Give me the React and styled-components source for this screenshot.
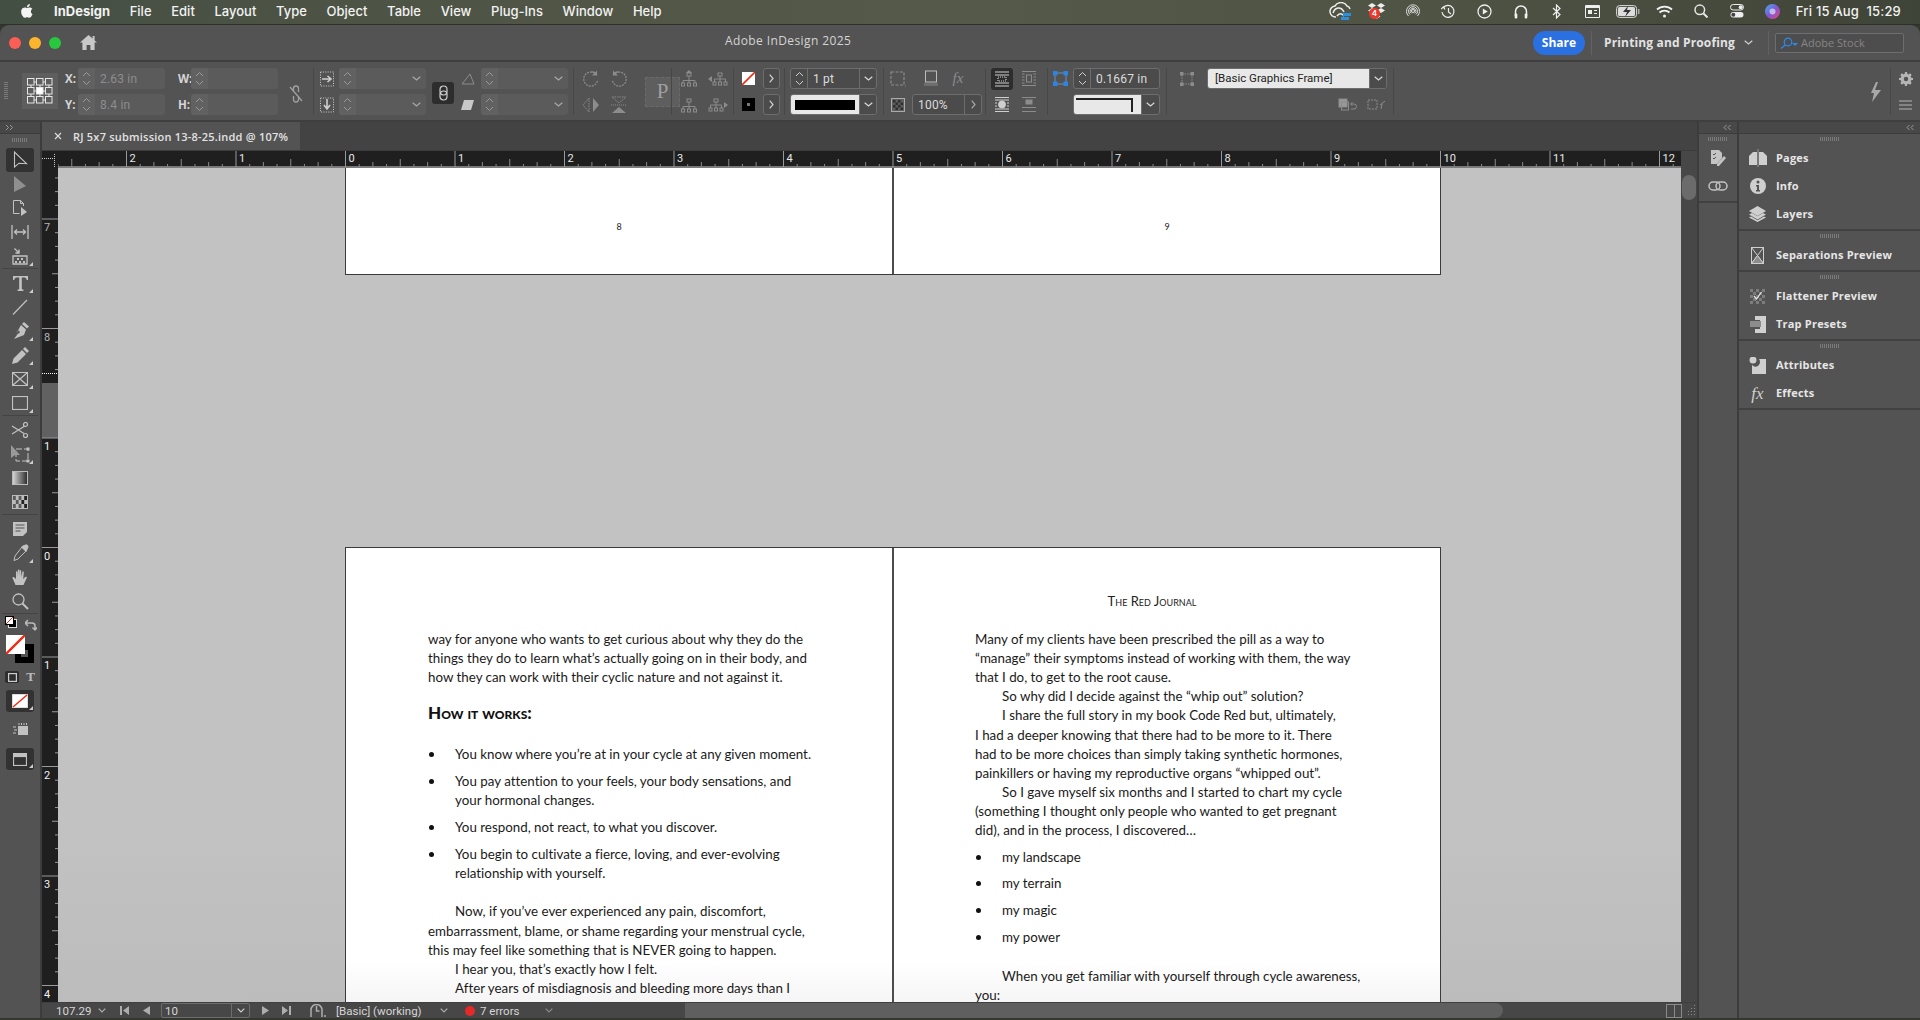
import React from 'react';
import styled, { createGlobalStyle } from 'styled-components';

const Global = createGlobalStyle`
  html, body { margin: 0; padding: 0; background: #3a3f35; overflow: hidden; }
  #root { width: 1920px; height: 1020px; }
  * { box-sizing: border-box; }
`;

const UI = `"Open Sans", "Liberation Sans", sans-serif`;
const NARROW = `Roboto, "Liberation Sans", sans-serif`;

const Screen = styled.div`
  width: 1920px; height: 1020px; display: flex; flex-direction: column; overflow: hidden;
  background: #33382f; font-family: ${UI};
`;

/* ---------- mac menu bar ---------- */
const MenuBar = styled.div`
  height: 25px; flex: none; display: flex; align-items: center; padding-left: 20px; padding-bottom: 2px;
  background: linear-gradient(90deg, #444f44 0%, #4e5445 20%, #55594a 50%, #4f5344 75%, #3f4438 100%);
  color: #f2f2f2; font: 500 13px Inter, "Liberation Sans", sans-serif;
  border-bottom: 1px solid #2f3129;
`;
const AppleWrap = styled.span` width: 14px; display: flex; margin-right: 20px; `;
const MenuItem = styled.span`
  margin-right: 19.7px; font-weight: ${p => p.$bold ? 700 : 500}; white-space: nowrap;
`;
const MenuRight = styled.div` margin-left: auto; display: flex; align-items: center; padding-right: 19px; height: 100%; `;
const StatusIcon = styled.span` width: 36px; display: flex; justify-content: center; align-items: center; position: relative; `;
const Clock = styled.span` margin-left: 5px; white-space: pre; letter-spacing: .2px; `;
const Badge = styled.span`
  position: absolute; left: 10px; top: 5px; width: 11px; height: 11px; border-radius: 50%; background: #e8392c;
  color: #fff; font-size: 8px; line-height: 11px; text-align: center; font-weight: 600;
`;

/* ---------- window ---------- */
const Window = styled.div`
  flex: 1; margin-bottom: 2px; min-height: 0; display: flex; flex-direction: column;
  background: #535353; border-radius: 9px 9px 0 0; overflow: hidden;
`;
const TitleBar = styled.div`
  height: 37px; flex: none; display: flex; align-items: center; position: relative; border-bottom: 2px solid #3e3e3e;
`;
const Lights = styled.div` display: flex; gap: 8px; margin-left: 9px; `;
const Light = styled.span` width: 12px; height: 12px; border-radius: 50%; background: ${p => p.$c}; `;
const HomeWrap = styled.span` display: flex; margin-left: 19px; color: #c8c8c8; `;
const Title = styled.span`
  position: absolute; left: 725px; top: 7px; color: #d4d4d4; font-size: 12px; letter-spacing: .4px; white-space: nowrap;
`;
const TitleRight = styled.div` margin-left: auto; display: flex; align-items: center; padding-right: 16px; `;
const ShareBtn = styled.span`
  width: 52px; height: 24px; border-radius: 12px; background: #2a70e0; color: #fff; text-align: center;
  font: 700 12px/24px ${UI};
`;
const VDiv = styled.span` width: 1px; height: 24px; background: #626262; margin: 0 ${p => p.$m}px 0 ${p => p.$l}px; `;
const Workspace = styled.span` color: #e2e2e2; font: 700 12px ${UI}; letter-spacing: .15px; white-space: nowrap; width: 131px; `;
const WsChevron = styled.span` display: flex; margin: 0 15px 0 9px; color: #cfcfcf; `;
const SearchBox = styled.div`
  width: 129px; height: 20px; border: 1px solid #6e6e6e; border-radius: 2px; display: flex; align-items: center;
  padding-left: 4px; gap: 3px; color: #2b8cf0; background: #4d4d4d;
`;
const SearchText = styled.span` color: #858585; font-size: 11px; white-space: nowrap; `;

/* ---------- control bar ---------- */
const ControlBar = styled.div`
  height: 60px; flex: none; display: flex; align-items: center; border-bottom: 2px solid #3f3f3f; padding-top: 1px;
  color: #8c8c8c;
`;
const Section = styled.div`
  width: ${p => p.$w}px; flex: none; height: 47px; display: flex; align-items: stretch;
  border-left: ${p => p.$first ? 'none' : '1px solid #474747'};
`;
const Grip = styled.span`
  width: 4px; height: 18px; margin: 14px 14px 0 4px; flex: none;
  background: repeating-linear-gradient(#7a7a7a 0 1px, transparent 1px 2px);
`;
const RefBox = styled.div`
  width: 36px; height: 36px; background: #5e5e5e; margin: 5px 7px 0 0; flex: none; display: flex; align-items: center; justify-content: center;
`;
const Stack = styled.div`
  width: ${p => p.$w}px; flex: none; display: grid; grid-template-rows: 21px 21px; row-gap: 5px;
  align-items: center; justify-items: center; margin-left: ${p => p.$ml || 0}px;
`;
const Label = styled.span` width: 13px; flex: none; font: 700 11.5px ${UI}; color: #d5d5d5; `;
const LabeledRow = styled.div` display: flex; align-items: center; width: 100%; `;
const Field = styled.div`
  width: ${p => p.$w}px; height: 21px; border-radius: 3px; display: flex; align-items: center; overflow: hidden;
  background: ${p => p.$active ? '#4b4b4b' : '#5b5b5b'};
  border: ${p => p.$active ? '1px solid #6d6d6d' : 'none'};
  color: ${p => p.$active ? '#dcdcdc' : '#8d8d8d'};
  font: 12px ${NARROW};
`;
const Spin = styled.span`
  width: ${p => p.$w || 17}px; height: 100%; flex: none; display: flex; align-items: center; justify-content: center;
  background: ${p => p.$active ? 'transparent' : '#616161'};
  border-right: ${p => p.$active ? '1px solid #6d6d6d' : 'none'};
  color: ${p => p.$active ? '#cfcfcf' : '#9a9a9a'};
`;
const Value = styled.span` flex: 1; padding-left: ${p => p.$pl || 5}px; white-space: nowrap; letter-spacing: .2px; line-height: 1; `;
const Drop = styled.span`
  width: ${p => p.$w || 17}px; height: 100%; flex: none; display: flex; align-items: center; justify-content: center;
  border-left: ${p => p.$line ? '1px solid #6d6d6d' : 'none'};
  color: ${p => p.$bright ? '#d8d8d8' : '#a8a8a8'};
  background: ${p => p.$dark ? '#4b4b4b' : 'transparent'};
`;
const LinkBtn = styled.span`
  width: 22px; height: 22px; align-self: center; flex: none; margin-left: 6px; margin-top: 3px; background: #2d2d2d; border-radius: 3px;
  display: flex; align-items: center; justify-content: center; color: #cfcfcf;
`;
const PBox = styled.div`
  width: 35px; height: 30px; align-self: center; margin-left: 12px; background: #5e5e5e; color: #a0a0a0; flex: none;
  display: flex; align-items: center; justify-content: center; font: 21px "Liberation Serif", serif; border: 1px dashed #6b6b6b;
`;
const Swatch = styled.span`
  width: 13px; height: 13px; flex: none; display: flex; align-items: center; justify-content: center; overflow: hidden;
  background: #000;
  &::after { content: ''; width: 3px; height: 3px; background: #777; }
`;
const ArrowBtn = styled.span`
  width: 17px; height: 21px; border: 1px solid #6d6d6d; border-radius: 3px; display: flex; align-items: center; justify-content: center;
  color: #d0d0d0; background: #4b4b4b;
`;
const StrokePreview = styled.span`
  flex: 1; height: 100%; background: #e8e8e8; display: flex; align-items: center; justify-content: center; padding: 0 4px;
`;
const StrokeLine = styled.span` display: block; width: 100%; height: 10px; background: #000; `;
const CornerPreview = styled.span`
  flex: 1; height: 100%; background: #e8e8e8; position: relative;
  &::after { content: ''; position: absolute; left: 2px; top: 3px; right: 8px; bottom: 2px; border-top: 2px solid #222; border-right: 2px solid #222; }
`;
const WrapBtn = styled.span`
  width: 22px; height: 22px; border-radius: 3px; display: flex; align-items: center; justify-content: center;
  background: ${p => p.$on ? '#2d2d2d' : 'transparent'}; color: #cfcfcf;
`;
const FrameField = styled.div`
  width: 180px; height: 21px; border: 1px solid #6d6d6d; border-radius: 3px; display: flex; overflow: hidden; align-items: center;
`;
const FrameText = styled.span`
  flex: 1; height: 100%; background: #e8e8e8; color: #222; font: 11.5px/18px ${NARROW}; padding-left: 7px; white-space: nowrap;
`;
const ChainSlot = styled.span` flex: 1; display: flex; align-items: center; justify-content: center; padding-top: 5px; color: #a0a0a0; `;
const PairRow = styled.div` display: flex; width: 100%; align-items: center; justify-content: center; color: #8c8c8c; padding-right: 7px; gap: 15px; `;
const OverrideIcons = styled.div` display: flex; width: 100%; justify-content: flex-end; gap: 9px; `;
const BoltWrap = styled.span` margin-left: auto; align-self: center; padding-right: 8px; display: flex; `;

/* ---------- main area ---------- */
const Main = styled.div` flex: 1; min-height: 0; display: flex; background: #3c3c3c; `;
const LeftCol = styled.div` width: 40px; flex: none; display: flex; flex-direction: column; margin-right: 2px; background: #535353; `;
const Strip = styled.div`
  height: 12px; flex: none; background: #484848; color: #9a9a9a; display: flex; align-items: center;
  justify-content: ${p => p.$end ? 'flex-end' : 'flex-start'}; padding: 0 5px; border-bottom: 1px solid #3c3c3c;
`;
const Toolbar = styled.div` flex: 1; display: flex; flex-direction: column; align-items: center; color: #c2c2c2; `;
const HGrip = styled.span`
  display: block; width: ${p => p.$w || 18}px; height: 4px; flex: none; margin: ${p => p.$m || '4px auto 3px'};
  background: repeating-linear-gradient(90deg, #7a7a7a 0 1px, transparent 1px 2px);
`;
const Tool = styled.div`
  width: 28px; height: ${p => p.$h || 24}px; flex: none; display: flex; align-items: center; justify-content: center; position: relative;
  background: ${p => p.$on ? '#323232' : 'transparent'}; border-radius: 3px;
  &::after {
    content: ''; display: ${p => p.$more ? 'block' : 'none'}; position: absolute; right: 1px; bottom: 2px;
    border-left: 4px solid transparent; border-bottom: 4px solid #cdcdcd;
  }
`;
const ToolSep = styled.div` width: 36px; height: 3px; flex: none; border-top: 1px solid #444; `;
const ToolSpacer = styled.div` height: ${p => p.$h}px; flex: none; `;
const ColorBox = styled.div` width: 34px; height: 47px; flex: none; position: relative; `;
const MiniDefaults = styled.span` position: absolute; left: 2px; top: 0; display: flex; `;
const SwapIcon = styled.span` position: absolute; right: 0; top: 3px; color: #bbb; display: flex; `;
const FillSwatch = styled.span`
  position: absolute; left: 3px; top: 19px; width: 19px; height: 19px; background: #fff; z-index: 1; overflow: hidden; display: flex;
`;
const StrokeSwatch = styled.span`
  position: absolute; left: 12px; top: 28px; width: 19px; height: 19px; border: 6px solid #000; background: #535353;
`;
const FormatRow = styled.div` display: flex; width: 30px; height: 24px; flex: none; margin-top: 2px; align-items: center; justify-content: space-between; color: #bbb; font: 700 13px "Liberation Serif", serif; `;
const FormatBtn = styled.span` width: 14px; height: 12px; border-radius: 2px; background: #2e2e2e; display: flex; align-items: center; justify-content: center; `;

const Center = styled.div` width: 1655px; flex: none; display: flex; flex-direction: column; background: #474747; `;
const TabRow = styled.div` height: 29px; flex: none; display: flex; background: #434343; border-bottom: 1px solid #3c3c3c; `;
const Tab = styled.div`
  width: 258px; background: #535353; display: flex; align-items: center; color: #e2e2e2; font: 600 11px ${UI}; white-space: nowrap; letter-spacing: .22px;
`;
const TabClose = styled.span` display: flex; width: 31px; justify-content: center; color: #dcdcdc; `;
const RulerRow = styled.div` height: 16px; flex: none; display: flex; background: #1f1f1f; `;
const RulerEnd = styled.div` flex: 1; background: #474747; `;
const Origin = styled.div` width: 16px; flex: none; `;
const RulerSvg = styled.svg` display: block; flex: none; background: #1f1f1f; `;
const Body = styled.div` flex: 1; min-height: 0; display: flex; `;
const Canvas = styled.div`
  width: 1623px; flex: none; overflow: hidden; background: linear-gradient(#c2c2c2 80%, #bcbcbc); padding-left: 287px;
  display: flex; flex-direction: column; border-top: 1px solid #7d7d7d;
`;
const Spread = styled.div`
  width: 1096px; flex: none; display: flex; height: ${p => p.$h}px; margin-bottom: ${p => p.$mb || 0}px;
  border: 1px solid #3a3a3a; border-top-width: ${p => p.$noTop ? 0 : 1}px; border-bottom-width: ${p => p.$fade ? 0 : 1}px;
  background: ${p => p.$fade ? 'linear-gradient(#fff 90%, #f4f4f4)' : '#fff'};
`;
const Page = styled.div`
  width: ${p => p.$spine ? 548 : 546}px; flex: none; color: #1a1a1a; font: 13.35px/19px Lato, "Liberation Sans", sans-serif;
  font-variant-ligatures: none;
  border-right: ${p => p.$spine ? '2px solid #4c4c4c' : 'none'};
  padding-left: ${p => p.$pl || 0}px; padding-top: ${p => p.$pt || 0}px;
`;
const Folio = styled.div`
  font-size: 9px; line-height: 10px; text-align: center; padding-top: 54px; color: #222;
`;
const Running = styled.div`
  font: 13px/16px Lato, sans-serif; text-align: center; font-variant: small-caps; margin-top: -37px; padding-right: 111px; height: 37px; color: #222;
`;
const L = styled.div`
  white-space: nowrap; height: ${p => p.$h || 19}px; line-height: ${p => p.$h || 19}px; padding-left: ${p => p.$ind ? 27 : 0}px; margin-top: ${p => p.$mt || 0}px;
`;
const Heading = styled.div`
  font: 900 17px/22px Lato, sans-serif; font-variant: small-caps; color: #111; margin-top: 15px; white-space: nowrap;
`;
const Bullet = styled.div`
  position: relative; padding-left: 27px; margin-top: ${p => p.$mt || 8}px; white-space: nowrap;
  &::before { content: ''; position: absolute; left: 1px; top: 7px; width: 5px; height: 5px; border-radius: 50%; background: #111; }
`;
const ScrollCol = styled.div` flex: 1; background: #474747; padding: 8px 1px 0 1px; `;
const ScrollThumb = styled.div` height: 25px; border-radius: 7px; background: #6b6b6b; `;
const StatusBar = styled.div`
  height: 16px; flex: none; display: flex; align-items: center; background: #474747; color: #d6d6d6; font: 11.5px ${NARROW}; white-space: nowrap;
  border-top: 1px solid #3f3f3f;
`;
const Zoom = styled.span` width: 36px; margin-left: 14px; overflow: hidden; flex: none; `;
const StatIcon = styled.span` display: flex; margin-left: ${p => p.$ml}px; color: ${p => p.$c || '#adadad'}; flex: none; `;
const PageField = styled.div`
  width: 89px; height: 15px; margin-left: 11px; border: 1px solid #6d6d6d; border-radius: 2px; display: flex; align-items: center; padding-left: 3px; flex: none;
`;
const PageDrop = styled.span`
  margin-left: auto; width: 18px; height: 100%; border-left: 1px solid #6d6d6d; display: flex; align-items: center; justify-content: center; color: #cfcfcf;
`;
const StatText = styled.span` margin-left: ${p => p.$ml}px; flex: none; width: ${p => p.$w}px; `;
const Dot = styled.span` width: 10px; height: 10px; border-radius: 50%; background: #e62a2a; margin-left: 17px; flex: none; `;
const HThumb = styled.div` width: 818px; height: 15px; margin-left: 132px; background: #5f5f5f; border-radius: 0 8px 8px 0; flex: none; `;
const Corner = styled.span` margin-left: auto; display: flex; align-items: center; gap: 4px; padding-right: 1px; color: #9a9a9a; `;
const ViewBtn = styled.span` width: 16px; height: 14px; border: 1px solid #8a8a8a; background: linear-gradient(90deg, transparent 7px, #8a8a8a 7px 8px, transparent 8px); `;

/* ---------- docks ---------- */
const Dock = styled.div` width: ${p => p.$w}px; flex: none; margin-left: 2px; display: flex; flex-direction: column; background: #535353; `;
const PanelGroup = styled.div`
  border-bottom: 2px solid #414141; flex: none; padding-bottom: 1px; position: relative; padding-top: 10px;
`;
const GripWrap = styled.span` position: absolute; top: 3px; left: 0; right: 0; display: flex; justify-content: center; `;
const PanelRow = styled.div` height: 28px; display: flex; align-items: center; color: #cfcfcf; `;
const PanelIcon = styled.span` width: 37px; display: flex; justify-content: center; flex: none; `;
const PanelName = styled.span` font: 700 11px ${UI}; color: #e6e6e6; letter-spacing: .2px; white-space: nowrap; margin-top: -2px; `;
const MiniRow = styled.div` height: 28px; display: flex; align-items: center; justify-content: center; color: #c4c4c4; `;
const FxGlyph = styled.span` color: ${p => p.$c}; font: italic ${p => p.$s}px/1 "Liberation Serif", serif; `;
const SpinnerWrap = styled.span` display: flex; `;
const FlipWrap = styled.span` display: flex; transform: ${p => p.$flip ? 'scaleX(-1)' : 'none'}; `;

/* ---------- icons ---------- */
const S = ({ w = 16, h = 16, vb, children, sw = 1.2, fill = 'none' }) => (
  <svg width={w} height={h} viewBox={vb || `0 0 ${w} ${h}`} fill={fill} stroke="currentColor" strokeWidth={sw}>{children}</svg>
);
const ChevD = ({ s = 8 }) => <S w={s} h={5}><path d={`M.7.7 ${s / 2} 4l${s / 2 - .7}-3.3`} /></S>;
const ChevR = () => <S w={5} h={9}><path d="M.7.7 4 4.5.7 8.3" /></S>;
const Spinner = () => <SpinnerWrap><S w={9} h={17} sw={1}><path d="M1 6 4.5 2.5 8 6M1 11l3.5 3.5L8 11" /></S></SpinnerWrap>;

const Apple = () => (
  <svg width="14" height="16" viewBox="0 0 14 16" fill="#f4f4f4"><path d="M10.9 8.4c0-1.7 1.4-2.5 1.5-2.6-.8-1.2-2.1-1.3-2.5-1.4-1.1-.1-2.1.6-2.6.6s-1.4-.6-2.3-.6C3.4 4.5 2.3 5.1 1.7 6.2.5 8.3 1.4 11.4 2.6 13.1c.6.8 1.2 1.8 2.2 1.7.9 0 1.2-.6 2.3-.6s1.4.6 2.3.6 1.6-.8 2.1-1.7c.7-1 1-1.9 1-2-.1 0-1.6-.7-1.6-2.7zM9.1 3.2c.5-.6.8-1.4.7-2.2-.7 0-1.6.5-2.1 1.1-.4.5-.8 1.3-.7 2.1.8 0 1.6-.4 2.1-1z" /></svg>
);
const Home = () => <svg width="17" height="15" viewBox="0 0 17 15" fill="currentColor"><path d="M8.5 0 0 7.6h2.4V15h4.2v-5h3.8v5h4.2V7.6H17L14.6 5.4V1h-2v2.6z" /></svg>;

const RefGrid = () => (
  <svg width="26" height="26" viewBox="0 0 26 26" fill="none" stroke="#e6e6e6">
    {[0, 9, 18].map(y => [0, 9, 18].map(x => (
      <rect key={`${x}${y}`} x={x + .5} y={y + .5} width="6.5" height="6.5" fill={x === 9 && y === 9 ? '#fff' : 'none'} />
    )))}
    <path d="M7 4h2M16 4h2M7 13h2M16 13h2M7 22h2M16 22h2M4 7v2M13 7v2M22 7v2M4 16v2M13 16v2M22 16v2" />
  </svg>
);
const ChainBroken = () => <S w={14} h={18} sw={1.3}><path d="M4.5 7V3.5a2.4 2.4 0 0 1 5 0V7M4.5 11v3.5a2.4 2.4 0 0 0 5 0V11M1 2l12 14" /></S>;
const Chain = () => <S w={9} h={16} sw={1.2}><rect x="1" y="1" width="7" height="9" rx="3.4" /><rect x="1" y="6" width="7" height="9" rx="3.4" /></S>;
const ScaleX = () => <svg width="14" height="16" viewBox="0 0 14 16" fill="none" stroke="#cfcfcf"><path d="M.5 1h13v14H.5z" strokeDasharray="1 1.4" /><path d="M2 8h8M7.5 5 11 8l-3.5 3" strokeWidth="1.6" /></svg>;
const ScaleY = () => <svg width="14" height="16" viewBox="0 0 14 16" fill="none" stroke="#cfcfcf"><path d="M.5 1h13v14H.5z" strokeDasharray="1 1.4" /><path d="M7 2v9M4 8l3 4 3-4" strokeWidth="1.6" /></svg>;
const Angle = () => <S w={14} h={12} sw={1}><path d="M1 11h12L9 1z" /></S>;
const Shear = () => <svg width="13" height="10" viewBox="0 0 13 10" fill="#c8c8c8"><path d="M3 0h10l-3 10H0z" /></svg>;
const RotCW = () => <S w={18} h={18} sw={1.2}><path d="M15.5 11A7 7 0 1 1 14 4.5" strokeDasharray="2 1" /><path d="M15 .5v5h-5" fill="currentColor" strokeWidth="0" /><path d="M9.5 1.8C12 1.6 14 3 15 5" /></S>;
const RotCCW = () => <S w={18} h={18} sw={1.2}><path d="M2.5 11A7 7 0 1 0 4 4.5" strokeDasharray="2 1" /><path d="M3 .5v5h5" fill="currentColor" strokeWidth="0" /><path d="M8.5 1.8C6 1.6 4 3 3 5" /></S>;
const FlipH = () => <svg width="18" height="16" viewBox="0 0 18 16" fill="currentColor"><path d="M7 1v14L1 8z" fill="none" stroke="currentColor" strokeDasharray="1.5 1" /><path d="M11 1v14l6-7z" /></svg>;
const FlipV = () => <svg width="16" height="18" viewBox="0 0 16 18" fill="currentColor"><path d="M1 1h14L8 7z" fill="none" stroke="currentColor" strokeDasharray="1.5 1" /><path d="M1 17h14l-7-6z" /><path d="M0 9h16" stroke="currentColor" strokeDasharray="1 1" /></svg>;
const TreeIcon = ({ a }) => (
  <svg width="18" height="18" viewBox="0 0 18 18" fill="none" stroke="currentColor" strokeWidth="1">
    <path d="M9 6v4M3 13v-2.500h12V13M9 10.500V13" />
    <rect x="7" y="3" width="4" height="3" /><rect x="1.500" y="13" width="3" height="3" /><rect x="7.500" y="13" width="3" height="3" /><rect x="13.500" y="13" width="3" height="3" />
    {a === 'u' && <path d="M9 0 6 3h6z" fill="currentColor" stroke="none" />}
  </svg>
);
const TreeSide = ({ flip }) => (
  <FlipWrap $flip={flip}>
    <svg width="20" height="14" viewBox="0 0 20 14" fill="none" stroke="currentColor" strokeWidth="1">
      <path d="M4 4 0 7l4 3z" fill="currentColor" stroke="none" />
      <rect x="10" y="1" width="4" height="3" /><path d="M12 4v3M6.500 10V7h11v3M12 7v3" />
      <rect x="5" y="10" width="3" height="3" /><rect x="10.500" y="10" width="3" height="3" /><rect x="16" y="10" width="3" height="3" />
    </svg>
  </FlipWrap>
);
const NoneSwatch = ({ w = 13 }) => <svg width={w} height={w} viewBox="0 0 13 13"><rect width="13" height="13" fill="#fff" /><path d="M0 13 13 0" stroke="#f02a12" strokeWidth="1.6" /></svg>;
const FrameDash = () => <S w={16} h={16} sw={1.2}><path d="M1 1h13v13H1z" strokeDasharray="3 1.5" /><path d="M15 15h1" /></S>;
const DropShadow = () => <svg width="14" height="18" viewBox="0 0 14 18" fill="none"><rect x="1.500" y="1" width="11" height="11" stroke="#bdbdbd" /><rect x="0" y="13" width="14" height="3" fill="#6d6d6d" /></svg>;
const Checker = () => (
  <svg width="14" height="14" viewBox="0 0 14 14"><rect x=".5" y=".5" width="13" height="13" fill="#5e5e5e" stroke="#aaa" />
    {[[2, 2], [7, 2], [4.5, 4.500], [9.500, 4.500], [2, 7], [7, 7], [4.5, 9.500], [9.500, 9.500]].map(([x, y]) => <rect key={`${x}${y}`} x={x} y={y} width="2.500" height="2.500" fill="#2f2f2f" />)}
  </svg>
);
const WrapNone = () => <S w={14} h={16} sw={1.2}><path d="M0 1h14M0 15h14M0 4h14M0 12h14" /><rect x="3" y="6" width="8" height="4" strokeDasharray="1 1" /></S>;
const WrapBox = () => <S w={14} h={15} sw={1}><path d="M0 .5h14M0 14.500h14M0 3h2.500M0 6h2.500M0 9h2.500M0 12h2.500M11.500 3H14M11.500 6H14M11.500 9H14M11.500 12H14" /><rect x="4.500" y="4" width="5" height="7" /></S>;
const WrapShape = () => <S w={14} h={15} sw={1}><path d="M0 .5h14M0 14.500h14M0 3h14M0 12h14M0 6h2M0 9h2M12 6h2M12 9h2" /><ellipse cx="7" cy="7.500" rx="3.500" ry="3.500" fill="currentColor" /></S>;
const WrapJump = () => <S w={14} h={15} sw={1}><path d="M0 .5h14M0 14.500h14M0 10.500h14" /><rect x="4" y="3" width="6" height="4" fill="currentColor" /></S>;
const CornerHandles = () => (
  <svg width="15" height="15" viewBox="0 0 15 15"><rect x="2" y="2" width="11" height="11" fill="none" stroke="#6d8fb5" /><g fill="#2b85e6"><rect width="4.500" height="4.500" /><rect x="10.500" width="4.500" height="4.500" /><rect y="10.500" width="4.500" height="4.500" /><rect x="10.500" y="10.500" width="4.500" height="4.500" /></g></svg>
);
const ObjStyle = () => <S w={14} h={14} sw={1}><rect x="2" y="2" width="10" height="10" strokeDasharray="1.500 1" /><g fill="currentColor"><rect x="0" y="0" width="3" height="3" /><rect x="11" y="0" width="3" height="3" /><rect x="0" y="11" width="3" height="3" /><rect x="11" y="11" width="3" height="3" /></g></S>;
const ClearOv = () => (
  <svg width="20" height="14" viewBox="0 0 20 14" fill="none" stroke="#8c8c8c"><rect x="1" y="1" width="8" height="8" fill="#999" /><rect x="3.500" y="4" width="7" height="8" /><path d="M13 11h3a2 2 0 0 0 0-5h-3M14.500 4 12.500 6l2 2" /></svg>
);
const ClearFrame = () => <S w={20} h={14} sw={1}><rect x="1" y="2" width="9" height="9" strokeDasharray="2 1" /><path d="m13 7 5-4M14 11l1-5" /></S>;
const Bolt = () => <svg width="12" height="20" viewBox="0 0 12 20" fill="#a8a8a8"><path d="M6 0h2L5 8h6L2 20l2-9H1z" /></svg>;
const Gear = () => <svg width="14" height="14" viewBox="0 0 14 14" fill="#b5b5b5"><path fillRule="evenodd" d="M6 0h2l.3 1.800 1.300.6L11 1.300l1.700 1.700-1.100 1.500.6 1.300L14 6v2l-1.800.3-.6 1.300 1.100 1.500-1.700 1.700-1.500-1.100-1.300.6L8 14H6l-.3-1.800-1.300-.6L3 12.700 1.300 11l1.100-1.500-.6-1.300L0 8V6l1.800-.3.6-1.300L1.300 3 3 1.300l1.400 1.100 1.300-.6zM7 4.800a2.200 2.200 0 1 0 0 4.400 2.200 2.200 0 0 0 0-4.400z" /></svg>;
const Burger = () => <svg width="13" height="10" viewBox="0 0 13 10" stroke="#b5b5b5"><path d="M0 1h13M0 5h13M0 9h13" /></svg>;
const SearchIcon = () => <svg width="18" height="12" viewBox="0 0 18 12" fill="none" stroke="currentColor" strokeWidth="1.200"><circle cx="8" cy="5" r="3.800" /><path d="M5.300 8 1 11.500" /><path d="m12 6 3 3 3-3z" fill="currentColor" stroke="none" /></svg>;

/* tools */
const T = {
  sel: <S w={16} h={18} sw={1.1}><path d="M2.500 1v15l4.500-3.800 7.500.5z" /></S>,
  dir: <svg width="14" height="18" viewBox="0 0 14 18" fill="#8f8f8f"><path d="M1 1v16l12-6z" /></svg>,
  page: <svg width="16" height="18" viewBox="0 0 16 18" fill="none" stroke="currentColor"><path d="M1.500 1.500h7l3 3V7M1.500 1.500v13h6M8.500 1.500v3h3" /><path d="M9 8v9l6-4z" fill="currentColor" stroke="none" /></svg>,
  gap: <S w={18} h={14} sw={1.3}><path d="M1 0v14M17 0v14M4 7h10M6 4.500 3.500 7 6 9.500M12 4.500 14.500 7 12 9.500" /></S>,
  cont: <svg width="16" height="18" viewBox="0 0 16 18" fill="none" stroke="currentColor" strokeWidth="1.300"><path d="M1 9h14v8H1z" /><path d="M2.500 1.500 7 6M7 2.500V6H3.500" /><g fill="currentColor" stroke="none"><rect x="5" y="11" width="2" height="2" /><rect x="9" y="11" width="2" height="2" /><rect x="3" y="14" width="2" height="2" /><rect x="7" y="14" width="2" height="2" /><rect x="11" y="14" width="2" height="2" /></g></svg>,
  type: <svg width="15" height="15" viewBox="0 0 15 15" fill="currentColor"><path d="M0 0h15v4h-1.300c-.2-1.500-.8-2.400-2.400-2.400H8.800v11c0 .8.500 1 1.600 1V15H4.600v-1.400c1.100 0 1.600-.2 1.600-1v-11H3.700C2.100 1.600 1.500 2.500 1.300 4H0z" /></svg>,
  line: <S w={16} h={16}><path d="M1 15.500 15 1" /></S>,
  pen: <svg width="17" height="18" viewBox="0 0 17 18" fill="currentColor"><path d="M12 0l5 4.500-2 2L10 2zM9 3l5 4.500-2 5.500-10 4 4-5.500a1.500 1.500 0 1 0-1.200-1z" /></svg>,
  pencil: <svg width="17" height="17" viewBox="0 0 17 17" fill="currentColor"><path d="M13 0l4 4-2 2-4-4zM10 3l4 4-8.500 8.500L0 17l1.500-5.500z" /></svg>,
  xframe: <S w={16} h={14}><path d="M.500.500h15v13H.500zM.500.500l15 13M15.500.500l-15 13" /></S>,
  rect: <S w={16} h={14}><rect x=".5" y=".5" width="15" height="13" /></S>,
  scissors: <S w={18} h={16} sw={1.2}><circle cx="14.500" cy="2.500" r="2" /><circle cx="14.500" cy="13.500" r="2" /><path d="M1 4 13 11.500M1 12 13 4.500" /></S>,
  free: <svg width="20" height="18" viewBox="0 0 20 18" fill="none" stroke="currentColor"><path d="M6 4h12v12H6z" strokeDasharray="6 2" /><path d="M1 0v13l4-3 5 0z" fill="#9a9a9a" stroke="none" /><g fill="currentColor" stroke="none"><rect x="16.500" y="2.500" width="3" height="3" /><rect x="16.500" y="14.500" width="3" height="3" /></g></svg>,
  grad: <svg width="16" height="14"><defs><linearGradient id="g1"><stop offset="0" stopColor="#d8d8d8" /><stop offset="1" stopColor="#2a2a2a" /></linearGradient></defs><rect x=".5" y=".5" width="15" height="13" fill="url(#g1)" stroke="#bbb" /></svg>,
  feather: <svg width="16" height="14" viewBox="0 0 16 14"><rect x=".5" y=".5" width="15" height="13" fill="#bcbcbc" stroke="#bbb" />{[0, 1, 2].map(r => [0, 1, 2, 3, 4].map(c => ((r + c) % 2 === 0 ? <rect key={`${r}${c}`} x={1 + c * 2.8} y={1 + r * 4} width="2.800" height="4" fill={c > 2 ? '#222' : '#5a5a5a'} /> : null)))}</svg>,
  note: <svg width="14" height="14" viewBox="0 0 14 14" fill="currentColor"><path d="M0 0h14v10l-4 4H0z" /><path d="M2.500 3h9M2.500 6h9M2.500 9h5" stroke="#535353" /></svg>,
  drop: <svg width="17" height="18" viewBox="0 0 17 18" fill="none" stroke="currentColor"><path d="m10 3 4 4-8 8-4 1.500L3 12z" /><path d="M9.500 3 14 7.500l1-2 1-2.500a1.800 1.800 0 0 0-2.500-2L11 2z" fill="currentColor" /></svg>,
  hand: <svg width="16" height="17" viewBox="0 0 16 17" fill="currentColor"><path d="M3.500 16 .5 9c-.3-.9.800-1.500 1.500-.8L4 10V3c0-1 1.400-1 1.500 0l.3 5V1.200c0-1 1.500-1 1.500 0V8l.3-6.300c0-1 1.500-1 1.500 0L9.500 8l.8-5c.2-1 1.500-.8 1.500.2L11.200 10l2-2c.8-.7 2 0 1.500 1L11.500 16z" /></svg>,
  zoom: <S w={17} h={17} sw={1.300}><circle cx="6.500" cy="6.500" r="5.500" /><path d="M10.500 10.500 16 16" strokeWidth="2" /></S>,
  gpu: <svg width="15" height="13" viewBox="0 0 15 13" fill="currentColor"><rect x="5" y="3" width="10" height="9" /><path d="M6 0v2M8.500 0v2M11 0v2M13.500 0v2M0 4h3M1 7h3M0 10h3" stroke="currentColor" /></svg>,
  screen: <S w={14} h={13} sw={1.200}><rect x=".5" y=".5" width="13" height="12" /><rect x=".5" y=".5" width="13" height="3" fill="currentColor" /></S>,
};

/* rulers */
const PX = 109.5;
const HRulerSvg = () => {
  const w = 1623; const zero = 287; const out = [];
  for (let i = -24; i <= 100; i++) {
    const x = zero + i * PX / 8 + .5;
    if (x < 0 || x > w) continue;
    const m = ((i % 8) + 8) % 8;
    const h = m === 0 ? 16 : m === 4 ? 8 : m % 2 === 0 ? 5 : 3;
    out.push(<path key={i} d={`M${x} ${16 - h}V16`} stroke={m === 0 ? '#9a9a9a' : '#8a8a8a'} />);
    if (m === 0) out.push(<text key={`t${i}`} x={x + 3} y="11" fill="#e8e8e8" fontSize="11" fontFamily="Roboto, sans-serif">{Math.abs(i / 8)}</text>);
  }
  return <RulerSvg width={w} height="16"><path d="M0 15.500H1623" stroke="#777" />{out}</RulerSvg>;
};
const VRulerSvg = () => {
  const h = 835; const zero = 547 - 167; const out = [];
  for (let i = -32; i <= 32; i++) {
    const y = zero + i * PX / 8 + .5;
    if (y < 0 || y > h) continue;
    const m = ((i % 8) + 8) % 8;
    if (y > 216 && y < 271) continue;
    const l = m === 0 ? 16 : m === 4 ? 6 : 3;
    out.push(<path key={i} d={`M${16 - l} ${y}H16`} stroke="#9a9a9a" />);
    if (m === 0) {
      const val = i === 0 ? 0 : i > 0 ? i / 8 : i === -8 ? 1 : i === -16 ? 8 : 7;
      out.push(<text key={`t${i}`} x="5" y={y + 12} textAnchor="middle" fill={val === 7 || val === 8 ? '#b5b5b5' : '#f0f0f0'} fontSize="11" fontFamily="Roboto, sans-serif">{val}</text>);
    }
  }
  return (
    <RulerSvg width="16" height={h}>
      <rect y="216" width="16" height="55" fill="#616161" />
      <path d="M0 206.500H16" stroke="#fff" strokeDasharray="1 1" />
      {out}
    </RulerSvg>
  );
};

const tools1 = [['sel', 1], ['dir'], ['page'], ['gap'], ['cont', 0, 1]];
const tools2 = [['type', 0, 1], ['line'], ['pen', 0, 1], ['pencil', 0, 1], ['xframe', 0, 1], ['rect', 0, 1]];
const tools3 = [['scissors'], ['free', 0, 1], ['grad'], ['feather']];
const tools4 = [['note'], ['drop', 0, 1], ['hand'], ['zoom']];
const ToolGroup = ({ list }) => list.map(([k, on, more]) => <Tool key={k} $on={on} $more={more}>{T[k]}</Tool>);

const LabeledField = ({ label, value }) => (
  <LabeledRow>
    <Label>{label}</Label>
    <Field $w={87}><Spin><Spinner /></Spin>{value && <Value>{value}</Value>}</Field>
  </LabeledRow>
);
const SpinField = () => <Field $w={87}><Spin><Spinner /></Spin><Value /><Drop $w={20}><ChevD s={9} /></Drop></Field>;
const Collapse = ({ dir }) => (
  <svg width="9" height="7" viewBox="0 0 9 7" fill="none" stroke="currentColor">
    <path d={dir === 'r' ? 'm1 1 2.500 2.500L1 6M5 1l2.500 2.500L5 6' : 'M3.500 1 1 3.500 3.500 6M7.500 1 5 3.500 7.500 6'} />
  </svg>
);

export default function App() {
  return (
    <Screen>
      <Global />
      <MenuBar>
        <AppleWrap><Apple /></AppleWrap>
        <MenuItem $bold>InDesign</MenuItem>
        {['File', 'Edit', 'Layout', 'Type', 'Object', 'Table', 'View', 'Plug-Ins', 'Window', 'Help'].map(m => <MenuItem key={m}>{m}</MenuItem>)}
        <MenuRight>
          <StatusIcon>
            <svg width="24" height="18" viewBox="0 0 24 18" fill="none" stroke="#eee" strokeWidth="1.500"><path d="M7 15a5.500 5.500 0 0 1-1-11 7 7 0 0 1 12 0 4 4 0 0 1 3 3" /><path d="M4 11c2-6 8-7 11-1M8 14c2-3 5-3 7 0" /><path d="M14 11h8v3h-8zM12 15h8v3h-8z" fill="#2a8fe0" stroke="none" /></svg>
          </StatusIcon>
          <StatusIcon>
            <svg width="20" height="16" viewBox="0 0 20 16" fill="#eee"><path d="M5 0l4 2.500L5 5 1 2.500zM14 0l4 2.500L14 5l-4-2.500zM5 5l4 2.500L5 10 1 7.500zM14 5l4 2.500-4 2.500-4-2.500zM9.500 11l4 2.500-4 2.500-4-2.500z" /></svg>
            <Badge>4</Badge>
          </StatusIcon>
          <StatusIcon>
            <svg width="16" height="16" viewBox="0 0 16 16" fill="none" stroke="#ddd"><circle cx="8" cy="8" r="1.500" /><path d="M3.500 13A6.500 6.500 0 1 1 12.500 13M5 11.500A4.500 4.500 0 1 1 11 11.500M6.300 10.300A2.800 2.800 0 1 1 9.700 10.300" /></svg>
          </StatusIcon>
          <StatusIcon>
            <svg width="15" height="15" viewBox="0 0 15 15" fill="none" stroke="#eee" strokeWidth="1.200"><path d="M2 4a6 6 0 1 1-1 4" /><path d="M0 5l2.500-2L4 5.500" /><path d="M7.500 4v4l2.500 2" /></svg>
          </StatusIcon>
          <StatusIcon>
            <svg width="15" height="15" viewBox="0 0 15 15" fill="none" stroke="#eee" strokeWidth="1.300"><circle cx="7.500" cy="7.500" r="6.500" /><path d="M5.800 4.500v6l5-3z" fill="#eee" stroke="none" /></svg>
          </StatusIcon>
          <StatusIcon>
            <svg width="14" height="15" viewBox="0 0 14 15" fill="none" stroke="#f2f2f2" strokeWidth="1.500"><path d="M1.500 12V7.500a5.500 5.500 0 0 1 11 0V12" /><rect x=".7" y="9.500" width="2.600" height="5" rx="1" fill="#f2f2f2" stroke="none" /><rect x="10.700" y="9.500" width="2.600" height="5" rx="1" fill="#f2f2f2" stroke="none" /></svg>
          </StatusIcon>
          <StatusIcon>
            <svg width="9" height="15" viewBox="0 0 9 15" fill="none" stroke="#eee" strokeWidth="1.200"><path d="M1 4l7 6.500L4.500 14V1L8 4.500 1 11" /></svg>
          </StatusIcon>
          <StatusIcon>
            <svg width="15" height="13" viewBox="0 0 15 13" fill="#eee"><path fillRule="evenodd" d="M1 0h13a1 1 0 0 1 1 1v11a1 1 0 0 1-1 1H1a1 1 0 0 1-1-1V1a1 1 0 0 1 1-1zM1 3v9h13V3z" /><path d="M3 5h4v4H3zM9 5h3v1H9zM9 8h3v1H9z" /></svg>
          </StatusIcon>
          <StatusIcon>
            <svg width="25" height="13" viewBox="0 0 25 13"><rect x=".6" y=".6" width="20" height="11.800" rx="3" fill="none" stroke="#ddd" /><rect x="2" y="2" width="17" height="9" rx="1.500" fill="#ddd" /><path d="M12 1 7 7h4l-2 5 6-7h-4z" fill="#333" /><rect x="22" y="4" width="1.500" height="5" fill="#aaa" /></svg>
          </StatusIcon>
          <StatusIcon>
            <svg width="17" height="13" viewBox="0 0 17 13" fill="none" stroke="#f2f2f2" strokeWidth="1.800"><path d="M1 4.500a11 11 0 0 1 15 0M3.500 7.500a7.500 7.500 0 0 1 10 0" /><circle cx="8.500" cy="11" r="1.500" fill="#f2f2f2" stroke="none" /></svg>
          </StatusIcon>
          <StatusIcon>
            <svg width="14" height="14" viewBox="0 0 14 14" fill="none" stroke="#e6e6e6" strokeWidth="1.500"><circle cx="5.800" cy="5.800" r="4.800" /><path d="M9.500 9.500 13.500 13.500" strokeWidth="2" /></svg>
          </StatusIcon>
          <StatusIcon>
            <svg width="14" height="14" viewBox="0 0 14 14"><rect x=".5" y=".5" width="13" height="5.500" rx="2.700" fill="none" stroke="#eee" /><circle cx="10.700" cy="3.200" r="2" fill="#eee" /><rect x=".5" y="8" width="13" height="5.500" rx="2.700" fill="#eee" /><circle cx="3.300" cy="10.700" r="2" fill="#444" /></svg>
          </StatusIcon>
          <StatusIcon>
            <svg width="15" height="15" viewBox="0 0 15 15"><defs><linearGradient id="sir" x1="0" y1="0" x2="1" y2="1"><stop offset="0" stopColor="#3fb6e8" /><stop offset=".5" stopColor="#8055d8" /><stop offset="1" stopColor="#e8467c" /></linearGradient></defs><circle cx="7.500" cy="7.500" r="7.500" fill="url(#sir)" /><circle cx="7.500" cy="7.500" r="3" fill="#d9e8f0" opacity=".7" /></svg>
          </StatusIcon>
          <Clock>Fri 15 Aug  15:29</Clock>
        </MenuRight>
      </MenuBar>

      <Window>
        <TitleBar>
          <Lights>
            <Light $c="#fb5e55" />
            <Light $c="#fdb52d" />
            <Light $c="#27c83e" />
          </Lights>
          <HomeWrap><Home /></HomeWrap>
          <Title>Adobe InDesign 2025</Title>
          <TitleRight>
            <ShareBtn>Share</ShareBtn>
            <VDiv $l={6} $m={12} />
            <Workspace>Printing and Proofing</Workspace>
            <WsChevron><ChevD s={9} /></WsChevron>
            <VDiv $l={0} $m={6} />
            <SearchBox><SearchIcon /><SearchText>Adobe Stock</SearchText></SearchBox>
          </TitleRight>
        </TitleBar>

        <ControlBar>
          <Section $first $w={313}>
            <Grip />
            <RefBox><RefGrid /></RefBox>
            <Stack $w={100}>
              <LabeledField label="X:" value="2.63 in" />
              <LabeledField label="Y:" value="8.4 in" />
            </Stack>
            <Stack $w={100} $ml={13}>
              <LabeledField label="W:" />
              <LabeledField label="H:" />
            </Stack>
            <ChainSlot><ChainBroken /></ChainSlot>
          </Section>
          <Section $w={260}>
            <Stack $w={25}><ScaleX /><ScaleY /></Stack>
            <Stack $w={87}><SpinField /><SpinField /></Stack>
            <LinkBtn><Chain /></LinkBtn>
            <Stack $w={27}><Angle /><Shear /></Stack>
            <Stack $w={87}><SpinField /><SpinField /></Stack>
          </Section>
          <Section $w={98}>
            <Stack $w={28} $ml={3}><RotCW /><FlipH /></Stack>
            <Stack $w={28}><RotCCW /><FlipV /></Stack>
            <PBox>P</PBox>
          </Section>
          <Section $w={62}>
            <Stack $w={30} $ml={2}><TreeIcon a="u" /><TreeIcon /></Stack>
            <Stack $w={27}><TreeSide /><TreeSide flip /></Stack>
          </Section>
          <Section $w={51}>
            <Stack $w={24} $ml={2}><NoneSwatch /><Swatch /></Stack>
            <Stack $w={17} $ml={3}><ArrowBtn><ChevR /></ArrowBtn><ArrowBtn><ChevR /></ArrowBtn></Stack>
          </Section>
          <Section $w={99}>
            <Stack $w={87} $ml={5}>
              <Field $active $w={87}><Spin $active><Spinner /></Spin><Value>1 pt</Value><Drop $line $bright><ChevD s={9} /></Drop></Field>
              <Field $active $w={87}><StrokePreview><StrokeLine /></StrokePreview><Drop $line $bright $dark><ChevD s={9} /></Drop></Field>
            </Stack>
          </Section>
          <Section $w={102}>
            <Stack $w={28}><FrameDash /><Checker /></Stack>
            <Stack $w={70}>
              <PairRow><DropShadow /><FxGlyph $c="#8c8c8c" $s={15}>fx</FxGlyph></PairRow>
              <Field $active $w={70}><Value>100%</Value><Drop $line $w={17}><ChevR /></Drop></Field>
            </Stack>
          </Section>
          <Section $w={62}>
            <Stack $w={22} $ml={5}><WrapBtn $on><WrapNone /></WrapBtn><WrapBtn><WrapShape /></WrapBtn></Stack>
            <Stack $w={26} $ml={3}><WrapBox /><WrapJump /></Stack>
          </Section>
          <Section $w={119}>
            <Stack $w={25}><CornerHandles /><span /></Stack>
            <Stack $w={87}>
              <Field $active $w={87}><Spin $active><Spinner /></Spin><Value>0.1667 in</Value></Field>
              <Field $active $w={87}><CornerPreview /><Drop $line $bright $w={18}><ChevD s={9} /></Drop></Field>
            </Stack>
          </Section>
          <Section $w={227}>
            <Stack $w={40}><ObjStyle /><span /></Stack>
            <Stack $w={180}>
              <FrameField><FrameText>[Basic Graphics Frame]</FrameText><Drop $w={17} $bright $dark $line><ChevD s={9} /></Drop></FrameField>
              <OverrideIcons><ClearOv /><ClearFrame /></OverrideIcons>
            </Stack>
          </Section>
          <Section $w={497}>
            <BoltWrap><Bolt /></BoltWrap>
          </Section>
          <Section $w={29}>
            <Stack $w={29}><Gear /><Burger /></Stack>
          </Section>
        </ControlBar>

        <Main>
          <LeftCol>
            <Strip><Collapse dir="r" /></Strip>
            <Toolbar>
              <HGrip $w={16} $m="4px auto 6px" />
              <ToolGroup list={tools1} />
              <ToolSep />
              <ToolGroup list={tools2} />
              <ToolSep />
              <ToolGroup list={tools3} />
              <ToolSep />
              <ToolGroup list={tools4} />
              <ToolSep />
              <ColorBox>
                <MiniDefaults>
                  <svg width="12" height="12" viewBox="0 0 12 12"><rect x="3.500" y="3.500" width="8" height="8" fill="#000" stroke="#ddd" /><rect x=".5" y=".5" width="8" height="8" fill="#fff" stroke="#000" /><path d="M1 8 8 1" stroke="#f02a12" /></svg>
                </MiniDefaults>
                <SwapIcon><svg width="12" height="12" viewBox="0 0 12 12" fill="none" stroke="currentColor" strokeWidth="1.500"><path d="M1 4h6a3 3 0 0 1 3 3v4M0 4l3-3M0 4l3 3M10 11l-2.500-2.500M10 11l2-2.500" /></svg></SwapIcon>
                <FillSwatch><NoneSwatch w={19} /></FillSwatch>
                <StrokeSwatch />
              </ColorBox>
              <FormatRow>
                <FormatBtn><svg width="9" height="9" viewBox="0 0 9 9" fill="none" stroke="#ccc" strokeWidth="1.200"><rect x=".6" y=".6" width="7.800" height="7.800" /></svg></FormatBtn>
                <span>T</span>
              </FormatRow>
              <ToolSpacer $h={1} />
              <Tool $on $more $h={22}><svg width="16" height="14" viewBox="0 0 16 14"><rect width="16" height="14" fill="#fff" stroke="#bbb" /><path d="M1 13 15 1" stroke="#f02a12" strokeWidth="1.500" /></svg></Tool>
              <ToolSpacer $h={5} />
              <Tool $h={24}>{T.gpu}</Tool>
              <ToolSpacer $h={7} />
              <Tool $on $more $h={22}>{T.screen}</Tool>
            </Toolbar>
          </LeftCol>

          <Center>
            <TabRow>
              <Tab><TabClose><svg width="8" height="8" viewBox="0 0 8 8" stroke="currentColor" strokeWidth="1.200"><path d="m1 1 6 6M7 1 1 7" /></svg></TabClose>RJ 5x7 submission 13-8-25.indd @ 107%</Tab>
            </TabRow>
            <RulerRow>
              <Origin><svg width="16" height="16"><path d="M0 6.500H13M12.500 2V16" stroke="#ccc" strokeDasharray="1 1" /></svg></Origin>
              <HRulerSvg />
              <RulerEnd />
            </RulerRow>
            <Body>
              <VRulerSvg />
              <Canvas>
                <Spread $h={107} $mb={272} $noTop>
                  <Page $spine><Folio>8</Folio></Page>
                  <Page><Folio>9</Folio></Page>
                </Spread>
                <Spread $h={460} $fade>
                  <Page $spine $pl={82} $pt={82}>
                    <L>way for anyone who wants to get curious about why they do the</L>
                    <L>things they do to learn what’s actually going on in their body, and</L>
                    <L>how they can work with their cyclic nature and not against it.</L>
                    <Heading>How it works:</Heading>
                    <Bullet $mt={21}>You know where you’re at in your cycle at any given moment.</Bullet>
                    <Bullet>You pay attention to your feels, your body sensations, and<br />your hormonal changes.</Bullet>
                    <Bullet>You respond, not react, to what you discover.</Bullet>
                    <Bullet>You begin to cultivate a fierce, loving, and ever-evolving<br />relationship with yourself.</Bullet>
                    <L $ind $mt={19}>Now, if you’ve ever experienced any pain, discomfort,</L>
                    <L $h={20}>embarrassment, blame, or shame regarding your menstrual cycle,</L>
                    <L>this may feel like something that is NEVER going to happen.</L>
                    <L $ind>I hear you, that’s exactly how I felt.</L>
                    <L $ind>After years of misdiagnosis and bleeding more days than I</L>
                  </Page>
                  <Page $pl={81} $pt={82}>
                    <Running>The Red Journal</Running>
                    <L>Many of my clients have been prescribed the pill as a way to</L>
                    <L>“manage” their symptoms instead of working with them, the way</L>
                    <L>that I do, to get to the root cause.</L>
                    <L $ind>So why did I decide against the “whip out” solution?</L>
                    <L $ind>I share the full story in my book Code Red but, ultimately,</L>
                    <L $mt={1}>I had a deeper knowing that there had to be more to it. There</L>
                    <L>had to be more choices than simply taking synthetic hormones,</L>
                    <L>painkillers or having my reproductive organs “whipped out”.</L>
                    <L $ind>So I gave myself six months and I started to chart my cycle</L>
                    <L>(something I thought only people who wanted to get pregnant</L>
                    <L>did), and in the process, I discovered…</L>
                    <Bullet $mt={7.7}>my landscape</Bullet>
                    <Bullet $mt={7.7}>my terrain</Bullet>
                    <Bullet $mt={7.7}>my magic</Bullet>
                    <Bullet $mt={7.7}>my power</Bullet>
                    <L $ind $mt={20}>When you get familiar with yourself through cycle awareness,</L>
                    <L $h={14} $mt={2}>you:</L>
                  </Page>
                </Spread>
              </Canvas>
              <ScrollCol><ScrollThumb /></ScrollCol>
            </Body>
            <StatusBar>
              <Zoom>107.29</Zoom>
              <StatIcon $ml={6}><ChevD /></StatIcon>
              <StatIcon $ml={14}><svg width="9" height="9" viewBox="0 0 9 9" fill="currentColor"><path d="M0 0h2v9H0zM9 0v9L3 4.500z" /></svg></StatIcon>
              <StatIcon $ml={14}><svg width="7" height="9" viewBox="0 0 7 9" fill="currentColor"><path d="M7 0v9L0 4.500z" /></svg></StatIcon>
              <PageField>10<PageDrop><ChevD /></PageDrop></PageField>
              <StatIcon $ml={12}><svg width="7" height="9" viewBox="0 0 7 9" fill="currentColor"><path d="M0 0v9l7-4.500z" /></svg></StatIcon>
              <StatIcon $ml={13}><svg width="9" height="9" viewBox="0 0 9 9" fill="currentColor"><path d="M0 0v9l6-4.500zM7 0h2v9H7z" /></svg></StatIcon>
              <StatIcon $ml={19}><svg width="17" height="13" viewBox="0 0 17 13" fill="none" stroke="currentColor" strokeWidth="1.500"><path d="M1 13V6a5.500 5.500 0 0 1 11 0v7" /><path d="M6.500 2v5h3" /><path d="M14 12h2" /></svg></StatIcon>
              <StatText $ml={9} $w={80}>[Basic] (working)</StatText>
              <StatIcon $ml={24}><ChevD /></StatIcon>
              <Dot />
              <StatText $ml={5} $w={40}>7 errors</StatText>
              <StatIcon $ml={25} $c="#8a8a8a"><ChevD /></StatIcon>
              <HThumb />
              <Corner>
                <ViewBtn />
                <svg width="10" height="11" viewBox="0 0 10 11" fill="#8a8a8a">{[[8, 0], [8, 3], [5, 3], [8, 6], [5, 6], [2, 6], [8, 9], [5, 9], [2, 9]].map(([x, y]) => <rect key={`${x}${y}`} x={x} y={y} width="1" height="1" />)}</svg>
              </Corner>
            </StatusBar>
          </Center>

          <Dock $w={38}>
            <Strip $end><Collapse /></Strip>
            <PanelGroup>
              <GripWrap><HGrip $w={20} $m="0" /></GripWrap>
              <MiniRow>
                <svg width="16" height="18" viewBox="0 0 16 18" fill="currentColor"><path d="M1 1h8l3 3v5l-5 6H1z" /><path d="m3 5 1 1 2-2M3 9l1 1 2-2" stroke="#535353" fill="none" /><path d="m14 7 2 2-7 8H7v-2z" /></svg>
              </MiniRow>
              <MiniRow>
                <svg width="20" height="10" viewBox="0 0 20 10" fill="none" stroke="currentColor" strokeWidth="1.500"><rect x="1" y="1" width="11" height="8" rx="4" /><rect x="8" y="1" width="11" height="8" rx="4" /></svg>
              </MiniRow>
            </PanelGroup>
          </Dock>

          <Dock $w={181}>
            <Strip $end><Collapse /></Strip>
            <PanelGroup>
              <GripWrap><HGrip $w={20} $m="0" /></GripWrap>
              <PanelRow><PanelIcon><svg width="18" height="18" viewBox="0 0 18 18" fill="currentColor"><path d="M0 7 4 3h4v13H0zM10 3h4l4 4v9h-8z" /><path d="M9 0v18" stroke="currentColor" strokeWidth=".6" /></svg></PanelIcon><PanelName>Pages</PanelName></PanelRow>
              <PanelRow><PanelIcon><svg width="16" height="16" viewBox="0 0 16 16"><circle cx="8" cy="8" r="8" fill="currentColor" /><circle cx="8" cy="4" r="1.500" fill="#535353" /><path d="M6 7h3v5h1v1.500H6V12h1V8.500H6z" fill="#535353" /></svg></PanelIcon><PanelName>Info</PanelName></PanelRow>
              <PanelRow><PanelIcon><svg width="17" height="16" viewBox="0 0 17 16" fill="currentColor"><path d="M8.500 0 17 5l-8.500 5L0 5z" /><path d="M0 8.500 3 7l5.500 3.300L14 7l3 1.500L8.500 13.500z" /><path d="M0 11.500 2 10.500l6.500 3.800 6.500-3.800 2 1-8.500 4.500z" /></svg></PanelIcon><PanelName>Layers</PanelName></PanelRow>
            </PanelGroup>
            <PanelGroup>
              <GripWrap><HGrip $w={20} $m="0" /></GripWrap>
              <PanelRow><PanelIcon><svg width="13" height="17" viewBox="0 0 13 17" stroke="#cfcfcf" fill="none"><rect x=".5" y=".5" width="12" height="16" /><path d="M.5.500 12.500 16.500M12.500.500.500 16.500" /><path d="M.5 16.500h12L6.500 8.500z" fill="#8c8c8c" /></svg></PanelIcon><PanelName>Separations Preview</PanelName></PanelRow>
            </PanelGroup>
            <PanelGroup>
              <GripWrap><HGrip $w={20} $m="0" /></GripWrap>
              <PanelRow><PanelIcon><svg width="15" height="15" viewBox="0 0 15 15"><g fill="#7d7d7d">{[0, 1, 2, 3, 4].map(r => [0, 1, 2, 3, 4].map(c => ((r + c) % 2 === 0 ? <rect key={`${r}${c}`} x={c * 3} y={r * 3} width="3" height="3" /> : null)))}</g><path d="m4 7 2.500 3 5-7" fill="none" stroke="#e8e8e8" strokeWidth="1.200" /></svg></PanelIcon><PanelName>Flattener Preview</PanelName></PanelRow>
              <PanelRow><PanelIcon><svg width="16" height="17" viewBox="0 0 16 17"><path d="M5 0h11v17H5v-4h5V4H5z" fill="#d0d0d0" /><rect y="5" width="11" height="6" fill="#8c8c8c" /></svg></PanelIcon><PanelName>Trap Presets</PanelName></PanelRow>
            </PanelGroup>
            <PanelGroup>
              <GripWrap><HGrip $w={20} $m="0" /></GripWrap>
              <PanelRow><PanelIcon><svg width="17" height="17" viewBox="0 0 17 17" fill="currentColor"><path fillRule="evenodd" d="M2 2h15v15H3V8a5 5 0 0 0 6 1 5 5 0 0 0 2-4 5 5 0 0 0-1-3z" /><circle cx="4" cy="3" r="3.500" /></svg></PanelIcon><PanelName>Attributes</PanelName></PanelRow>
              <PanelRow><PanelIcon><FxGlyph $c="#cfcfcf" $s={17}>fx</FxGlyph></PanelIcon><PanelName>Effects</PanelName></PanelRow>
            </PanelGroup>
          </Dock>
        </Main>
      </Window>
    </Screen>
  );
}
